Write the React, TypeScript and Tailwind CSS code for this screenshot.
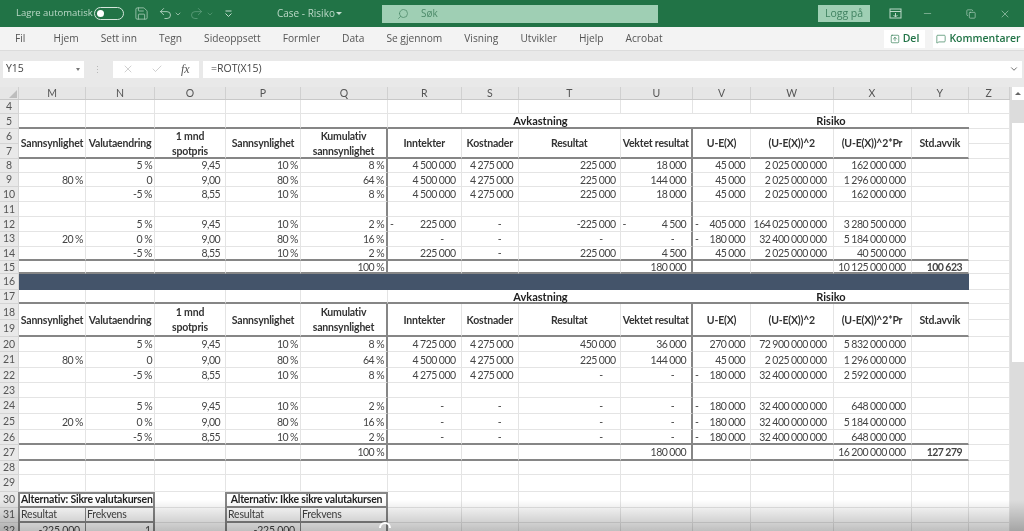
import { Check, ChevronDown, Copy, MessageSquare, Minus, Redo2, Save, Search, SquareArrowUp, Undo2, X } from 'lucide-react';

const tabs = ['Hjem', 'Sett inn', 'Tegn', 'Sideoppsett', 'Formler', 'Data', 'Se gjennom', 'Visning', 'Utvikler', 'Hjelp', 'Acrobat'];
const columns = ['M', 'N', 'O', 'P', 'Q', 'R', 'S', 'T', 'U', 'V', 'W', 'X', 'Y', 'Z'];

// right padding per column, percent columns sit closer to the edge
const pads = ['pr-[2px]', 'pr-[2px]', 'pr-[5px]', 'pr-[2px]', 'pr-[2px]', 'pr-[5px]', 'pr-[5px]', 'pr-[4px]', 'pr-[5px]', 'pr-[5px]', 'pr-[6px]', 'pr-[5px]', 'pr-[6px]', 'pr-[2px]'];

const blank = ['', '', '', '', '', '', '', '', '', '', '', '', '', ''];

// "~" = accounting format with the minus at the left edge of the cell
const upper: Record<number, string[]> = {
  8: ['', '5 %', '9,45', '10 %', '8 %', '4 500 000', '4 275 000', '225 000', '18 000', '45 000', '2 025 000 000', '162 000 000', '', ''],
  9: ['80 %', '0', '9,00', '80 %', '64 %', '4 500 000', '4 275 000', '225 000', '144 000', '45 000', '2 025 000 000', '1 296 000 000', '', ''],
  10: ['', '-5 %', '8,55', '10 %', '8 %', '4 500 000', '4 275 000', '225 000', '18 000', '45 000', '2 025 000 000', '162 000 000', '', ''],
  11: blank,
  12: ['', '5 %', '9,45', '10 %', '2 %', '~225 000', '-', '-225 000', '~4 500', '~405 000', '164 025 000 000', '3 280 500 000', '', ''],
  13: ['20 %', '0 %', '9,00', '80 %', '16 %', '-', '-', '-', '-', '~180 000', '32 400 000 000', '5 184 000 000', '', ''],
  14: ['', '-5 %', '8,55', '10 %', '2 %', '225 000', '-', '225 000', '4 500', '45 000', '2 025 000 000', '40 500 000', '', ''],
  15: ['', '', '', '', '100 %', '', '', '', '180 000', '', '', '10 125 000 000', '100 623', ''],
};

const lower: Record<number, string[]> = {
  20: ['', '5 %', '9,45', '10 %', '8 %', '4 725 000', '4 275 000', '450 000', '36 000', '270 000', '72 900 000 000', '5 832 000 000', '', ''],
  21: ['80 %', '0', '9,00', '80 %', '64 %', '4 500 000', '4 275 000', '225 000', '144 000', '45 000', '2 025 000 000', '1 296 000 000', '', ''],
  22: ['', '-5 %', '8,55', '10 %', '8 %', '4 275 000', '4 275 000', '-', '-', '~180 000', '32 400 000 000', '2 592 000 000', '', ''],
  23: blank,
  24: ['', '5 %', '9,45', '10 %', '2 %', '-', '-', '-', '-', '~180 000', '32 400 000 000', '648 000 000', '', ''],
  25: ['20 %', '0 %', '9,00', '80 %', '16 %', '-', '-', '-', '-', '~180 000', '32 400 000 000', '5 184 000 000', '', ''],
  26: ['', '-5 %', '8,55', '10 %', '2 %', '-', '-', '-', '-', '~180 000', '32 400 000 000', '648 000 000', '', ''],
  27: ['', '', '', '', '100 %', '', '', '', '180 000', '', '', '16 200 000 000', '127 279', ''],
};

function RowHead({ n }: { n: number }) {
  return (
    <div className="flex items-center justify-center bg-[#e9e9e9] border-b border-r border-[#d4d4d4] text-[10.5px] text-[#555]">
      {n}
    </div>
  );
}

function cellBorders(col: number, dark: boolean, framed: boolean) {
  const bottom = dark && col < 13 ? 'border-b-2 border-b-[#868686]' : 'border-b border-b-[#e4e4e4]';
  const right = framed && (col === 4 || col === 8) ? 'border-r-2 border-r-[#868686]' : 'border-r border-r-[#e4e4e4]';
  return `${bottom} ${right}`;
}

function DataRow({ n, values, dark = false, strong = false, framed = true }: { n: number; values: string[]; dark?: boolean; strong?: boolean; framed?: boolean }) {
  return (
    <>
      <RowHead n={n} />
      {values.map((v, i) => {
        const isZero = v === '-';
        const isNeg = v.startsWith('~');
        return (
          <div
            key={i}
            className={`flex items-center justify-end pt-[1px] whitespace-nowrap overflow-hidden text-[10.5px] tracking-[-0.55px] text-[#444] ${cellBorders(i, dark, framed)} ${isZero ? 'pr-[17px]' : pads[i]} ${strong && i === 12 ? 'font-bold text-[#1f1f1f]' : ''}`}
          >
            {isNeg && <span className="mr-auto pl-[2px]">-</span>}
            {isNeg ? v.slice(1) : v}
          </div>
        );
      })}
    </>
  );
}

function TitleRow({ n }: { n: number }) {
  return (
    <>
      <RowHead n={n} />
      {[0, 1, 2, 3, 4].map((i) => (
        <div key={i} className="border-b-2 border-b-[#868686] border-r border-r-[#e4e4e4]" />
      ))}
      <div className="col-span-4 flex items-center justify-center pt-[1px] border-b-2 border-b-[#868686] text-[11px] font-bold text-[#222]">Avkastning</div>
      <div className="col-span-4 flex items-center justify-center pt-[1px] border-b-2 border-b-[#868686] text-[11px] font-bold text-[#222]">Risiko</div>
      <div className="border-b border-r border-[#e4e4e4]" />
    </>
  );
}

const headers = [
  ['Sannsynlighet'],
  ['Valutaendring'],
  ['1 mnd', 'spotpris'],
  ['Sannsynlighet'],
  ['Kumulativ', 'sannsynlighet'],
  ['Inntekter'],
  ['Kostnader'],
  ['Resultat'],
  ['Vektet resultat'],
  ['U-E(X)'],
  ['(U-E(X))^2'],
  ['(U-E(X))^2*Pr'],
  ['Std.avvik'],
];

function HeaderRows({ n }: { n: number }) {
  return (
    <>
      <RowHead n={n} />
      {headers.map((lines, i) => (
        <div
          key={i}
          className={`row-span-2 flex flex-col items-center justify-center gap-[3px] pt-[1px] whitespace-nowrap font-bold leading-[12px] tracking-[-0.2px] text-[#333] ${cellBorders(i, true, true)}`}
        >
          {lines.map((l) => (
            <span key={l}>{l}</span>
          ))}
        </div>
      ))}
      <div className="border-b border-r border-[#e4e4e4]" />
      <RowHead n={n + 1} />
      <div className="border-b border-r border-[#e4e4e4]" />
    </>
  );
}

function AltRows() {
  const frame = 'border-2 border-[#868686] -ml-[1px] tracking-[-0.2px]';
  const grid = 'border-b border-r border-[#e4e4e4]';
  const after = [0, 1, 2, 3, 4, 5, 6, 7, 8];
  const left = 'border-l-2 border-r border-[#868686] -ml-[1px] text-[10.5px] tracking-[-0.2px] text-[#444]';
  const right = 'border-r-2 border-[#868686] text-[10.5px] tracking-[-0.2px] text-[#444]';
  return (
    <>
      <RowHead n={30} />
      <div className={`col-span-2 flex items-center pl-[1px] whitespace-nowrap font-bold text-[#1f1f1f] ${frame}`}>Alternativ: Sikre valutakursen</div>
      <div className={grid} />
      <div className={`col-span-2 flex items-center justify-center whitespace-nowrap font-bold text-[#1f1f1f] ${frame}`}>Alternativ: Ikke sikre valutakursen</div>
      {after.map((i) => (
        <div key={i} className={grid} />
      ))}
      <RowHead n={31} />
      <div className={`flex items-center pl-[1px] border-b-2 ${left}`}>Resultat</div>
      <div className={`flex items-center pl-[1px] border-b-2 ${right}`}>Frekvens</div>
      <div className={grid} />
      <div className={`flex items-center pl-[1px] border-b-2 ${left}`}>Resultat</div>
      <div className={`flex items-center pl-[1px] border-b-2 ${right}`}>Frekvens</div>
      {after.map((i) => (
        <div key={i} className={grid} />
      ))}
      <RowHead n={32} />
      <div className={`flex items-center justify-end pr-[5px] ${left}`}>-225 000</div>
      <div className={`flex items-center justify-end pr-[2px] ${right}`}>1</div>
      <div className={grid} />
      <div className={`flex items-center justify-end pr-[5px] ${left}`}>-225 000</div>
      <div className={right} />
      {after.map((i) => (
        <div key={i} className={grid} />
      ))}
    </>
  );
}

export default function App() {
  return (
    <div className="relative w-[1024px] h-[531px] overflow-hidden bg-white blur-[0.4px] font-['Open_Sans',sans-serif]">
      {/* Title bar */}
      <div className="flex items-center h-[27px] bg-[#217346] pl-[16px] text-[9.5px] text-[#bcd9c8]">
        <span className="w-[72px] whitespace-nowrap">Lagre automatisk</span>
        <div className="ml-[6px] flex items-center w-[30px] h-[13px] rounded-full border border-[#d5e6dc] pl-[2px]">
          <div className="w-[7px] h-[7px] rounded-full bg-white" />
        </div>
        <Save className="ml-[10px] w-[15px] h-[15px] text-[#a9cdb8]" strokeWidth={1.3} />
        <Undo2 className="ml-[9px] w-[15px] h-[15px] text-[#c4ddcf]" strokeWidth={1.3} />
        <ChevronDown className="ml-[1px] w-[8px] h-[8px] text-[#c4ddcf]" strokeWidth={2} />
        <Redo2 className="ml-[7px] w-[15px] h-[15px] text-[#5f9f7c]" strokeWidth={1.3} />
        <ChevronDown className="ml-[2px] w-[8px] h-[8px] text-[#5f9f7c]" strokeWidth={2} />
        <svg className="ml-[10px] w-[9px] h-[9px] text-[#c4ddcf]" viewBox="0 0 9 9" fill="none" stroke="currentColor">
          <path d="M1.5 2h6M1.5 4.5l3 3 3-3" />
        </svg>
        <span className="ml-[44px] w-[55px] whitespace-nowrap text-[10px]">Case - Risiko</span>
        <span className="ml-[4px] w-0 h-0 border-x-[3px] border-x-transparent border-t-[3px] border-t-[#c4ddcf]" />
        <div className="ml-[40px] flex items-center w-[276px] h-[18px] bg-[#9fcfb4] pl-[15px] text-[10px] text-[#4c8a69]">
          <Search className="w-[12px] h-[12px] -scale-x-100" strokeWidth={1.5} />
          <span className="ml-[12px]">Søk</span>
        </div>
        <div className="ml-[160px] flex items-center justify-center w-[52px] h-[17px] bg-[#9fcfb4] text-[10.5px] text-[#3f8160]">Logg på</div>
        <svg className="ml-[19px] w-[13px] h-[11px] text-[#bcd9c8]" viewBox="0 0 13 11" fill="none" stroke="currentColor">
          <rect x="1" y="1" width="11" height="9" />
          <path d="M1 3.5h11M6.5 5v4M4.5 7l2 2 2-2" />
        </svg>
        <Minus className="ml-[20px] w-[11px] h-[11px] text-[#bcd9c8]" strokeWidth={1.2} />
        <Copy className="ml-[33px] w-[10px] h-[10px] text-[#bcd9c8]" strokeWidth={1.5} />
        <X className="ml-[23px] w-[12px] h-[12px] text-[#bcd9c8]" strokeWidth={1.2} />
      </div>

      {/* Ribbon tabs */}
      <div className="flex items-center h-[24px] bg-[#f3f3f3] border-b border-[#dcdcdc] pl-[15px] text-[10.2px] text-[#555]">
        <span className="mr-[28px]">Fil</span>
        <div className="flex items-center gap-[22px] whitespace-nowrap">
          {tabs.map((t) => (
            <span key={t}>{t}</span>
          ))}
        </div>
        <div className="ml-auto flex items-center gap-[8px] text-[10.5px] font-semibold text-[#217346]">
          <div className="flex items-center justify-center gap-[3px] w-[41px] h-[18px] bg-white">
            <SquareArrowUp className="w-[10px] h-[10px]" strokeWidth={1.5} />
            <span>Del</span>
          </div>
          <div className="flex items-center justify-center gap-[3px] w-[91px] h-[18px] bg-white">
            <MessageSquare className="w-[10px] h-[10px]" strokeWidth={1.5} />
            <span>Kommentarer</span>
          </div>
        </div>
      </div>

      {/* Formula bar */}
      <div className="flex items-center h-[36px] bg-[#e9e9e9] pl-[3px] pr-[2px] text-[10.5px] text-[#444]">
        <div className="flex items-center justify-between w-[81px] h-[17px] bg-white pl-[3px] pr-[4px]">
          <span>Y15</span>
          <span className="w-0 h-0 border-x-[2px] border-x-transparent border-t-[3px] border-t-[#777]" />
        </div>
        <span className="ml-[9px] text-[9px] leading-none text-[#b5b5b5]">⋮</span>
        <div className="ml-[11px] flex items-center w-[86px] h-[17px] bg-white pl-[9px]">
          <X className="w-[12px] h-[12px] text-[#b0b0b0]" strokeWidth={1.2} />
          <Check className="ml-[17px] w-[12px] h-[12px] text-[#b0b0b0]" strokeWidth={1.2} />
          <span className="ml-[18px] font-['Liberation_Serif',serif] italic text-[12px] text-[#555]">fx</span>
        </div>
        <div className="ml-[4px] flex items-center flex-1 h-[17px] bg-white pl-[8px] pr-[3px]">
          <span>=ROT(X15)</span>
          <ChevronDown className="ml-auto w-[10px] h-[10px] text-[#555]" strokeWidth={2} />
        </div>
      </div>

      {/* Sheet */}
      <div className="flex">
        <div className="w-[1010px] font-['Lato',sans-serif] text-[10.5px] leading-none">
          <div className="flex h-[13px] bg-[#e6e6e6] border-b border-[#c8c8c8] text-[10.5px] text-[#555]">
            <div className="flex items-end justify-end w-[19px] border-r border-[#d0d0d0] pb-[1px] pr-[1px]">
              <span className="w-0 h-0 border-b-[8px] border-l-[8px] border-l-transparent border-b-[#bdbdbd]" />
            </div>
            <div className="grid flex-1 grid-cols-[67px_69px_71px_75px_87px_73.5px_57.5px_101.5px_72.5px_58px_82.5px_78px_57.5px_40.5px]">
              {columns.map((c) => (
                <div key={c} className="flex items-center justify-center border-r border-[#d0d0d0]">
                  {c}
                </div>
              ))}
            </div>
          </div>
          <div className="grid grid-cols-[19px_67px_69px_71px_75px_87px_73.5px_57.5px_101.5px_72.5px_58px_82.5px_78px_57.5px_40.5px] grid-rows-[13.5px_15.5px_15px_14.7px_14px_14.6px_14.4px_15.6px_14.4px_15px_14px_13.6px_15.7px_14.3px_16.2px_16.2px_15.3px_15.7px_15.6px_15px_16px_15.7px_15px_15.7px_14.3px_16.7px_16px_15px_16px]">
            <DataRow n={4} values={blank} framed={false} />
            <TitleRow n={5} />
            <HeaderRows n={6} />
            {[8, 9, 10, 11, 12, 13].map((n) => (
              <DataRow key={n} n={n} values={upper[n]} />
            ))}
            <DataRow n={14} values={upper[14]} dark />
            <DataRow n={15} values={upper[15]} dark strong />
            <RowHead n={16} />
            <div className="col-span-13 bg-[#44546a]" />
            <div className="border-b border-r border-[#e4e4e4]" />
            <TitleRow n={17} />
            <HeaderRows n={18} />
            {[20, 21, 22, 23, 24, 25].map((n) => (
              <DataRow key={n} n={n} values={lower[n]} />
            ))}
            <DataRow n={26} values={lower[26]} dark />
            <DataRow n={27} values={lower[27]} dark strong />
            <DataRow n={28} values={blank} framed={false} />
            <DataRow n={29} values={blank} framed={false} />
            <AltRows />
          </div>
        </div>

        {/* Scrollbar */}
        <div className="w-[14px] flex flex-col bg-[#dcdcdc]">
          <div className="flex items-center justify-center ml-[2px] h-[13px] bg-white">
            <span className="w-0 h-0 border-x-[3px] border-x-transparent border-b-[3px] border-b-[#666]" />
          </div>
          <div className="h-[23px]" />
          <div className="ml-[2px] h-[239px] bg-white" />
        </div>
      </div>

      {/* video player shade and spinner over the sheet */}
      <div className="absolute inset-x-0 bottom-0 h-[31px] bg-gradient-to-b from-transparent to-black/25" />
      <svg className="absolute left-[378px] top-[522px] w-[14px] h-[14px]" viewBox="0 0 14 14" fill="none" stroke="white" strokeWidth="2">
        <path d="M2 6a5 5 0 0 1 10 0" />
      </svg>
    </div>
  );
}
